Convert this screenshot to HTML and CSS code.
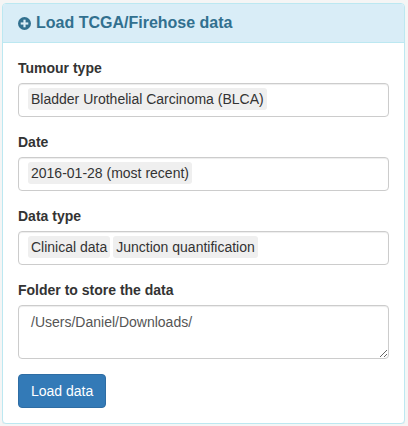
FILE: index.html
```html
<!DOCTYPE html>
<html>
<head>
<meta charset="utf-8">
<link rel="stylesheet" href="styles.css">
</head>
<body>
<div class="panel">
  <div class="panel-heading">
    <h3 class="panel-title">
      <svg class="icon" viewBox="0 0 12 12" width="13" height="13" aria-hidden="true">
        <circle cx="6" cy="6" r="6" fill="#31708f"/>
        <rect x="5" y="2.5" width="2" height="7" fill="#d9edf7"/>
        <rect x="2.5" y="5" width="7" height="2" fill="#d9edf7"/>
      </svg>
      Load TCGA/Firehose data
    </h3>
  </div>
  <div class="panel-body">
    <div class="form-group">
      <label class="label">Tumour type</label>
      <div class="select">
        <span class="chip">Bladder Urothelial Carcinoma (BLCA)</span>
      </div>
    </div>
    <div class="form-group">
      <label class="label">Date</label>
      <div class="select">
        <span class="chip">2016-01-28 (most recent)</span>
      </div>
    </div>
    <div class="form-group">
      <label class="label">Data type</label>
      <div class="select">
        <span class="chip">Clinical data</span>
        <span class="chip">Junction quantification</span>
      </div>
    </div>
    <div class="form-group">
      <label class="label">Folder to store the data</label>
      <textarea class="textarea">/Users/Daniel/Downloads/</textarea>
    </div>
    <button class="btn">Load data</button>
  </div>
</div>
</body>
</html>
```
FILE: styles.css
```css
html, body {
  background: #f5f5f5;
}
body {
  margin: 3px 3px 2px 2px;
  font-family: "Liberation Sans", Arial, sans-serif;
  font-size: 14px;
  line-height: 20px;
  color: #333;
}
.panel {
  background: #fff;
  border: 1px solid #bce8f1;
  border-radius: 4px;
  box-shadow: 0 1px 1px rgba(0,0,0,0.05);
}
.panel-heading {
  background: #d9edf7;
  border-bottom: 1px solid #bce8f1;
  border-radius: 3px 3px 0 0;
  padding: 10px 15px;
  height: 18px;
}
.panel-title {
  margin: 0;
  font-size: 16px;
  line-height: 18px;
  font-weight: bold;
  color: #31708f;
  display: flex;
  align-items: center;
  gap: 5px;
}
.icon {
  display: block;
  flex: none;
}
.panel-body {
  padding: 15px;
}
.form-group {
  margin-bottom: 15px;
}
.label {
  display: block;
  font-weight: bold;
  margin-bottom: 5px;
}
.select {
  box-sizing: border-box;
  height: 34px;
  border: 1px solid #ccc;
  border-radius: 4px;
  padding: 4px 9px;
  display: flex;
  align-items: flex-start;
  gap: 3px;
  box-shadow: inset 0 1px 1px rgba(0,0,0,0.075);
}
.chip {
  background: #efefef;
  border-radius: 3px;
  padding: 1px 3px;
  line-height: 20px;
  color: #333;
}
.textarea {
  display: block;
  box-sizing: border-box;
  width: 100%;
  height: 54px;
  border: 1px solid #ccc;
  border-radius: 4px;
  padding: 6px 12px;
  font-family: "Liberation Sans", Arial, sans-serif;
  font-size: 14px;
  line-height: 20px;
  color: #555;
  box-shadow: inset 0 1px 1px rgba(0,0,0,0.075);
  margin: 0;
  resize: vertical;
}
.btn {
  display: block;
  height: 34px;
  padding: 6px 12px;
  background: #337ab7;
  border: 1px solid #2e6da4;
  border-radius: 4px;
  color: #fff;
  font-family: "Liberation Sans", Arial, sans-serif;
  font-size: 14px;
  line-height: 20px;
}
```
